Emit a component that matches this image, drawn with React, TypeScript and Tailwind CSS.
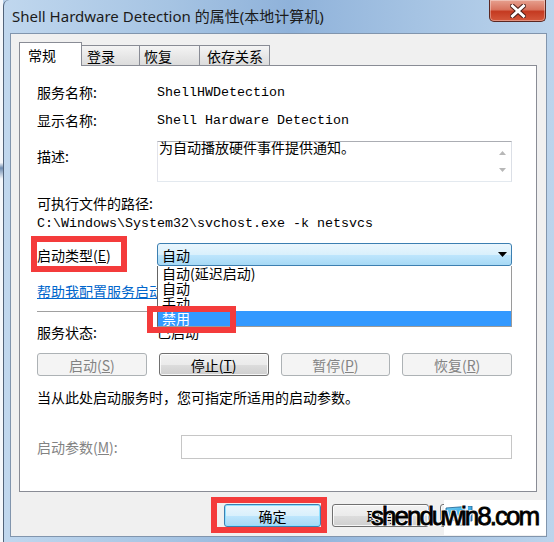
import React from "react";

function Btn({
  children,
  disabled,
  className = "",
}: {
  children: React.ReactNode;
  disabled?: boolean;
  className?: string;
}) {
  if (disabled) {
    return (
      <div
        className={`h-[23px] rounded-[3px] border border-[#adb2b5] bg-[#f4f4f4] text-[#838383] flex items-center justify-center leading-[14px] ${className}`}
      >
        {children}
      </div>
    );
  }
  return (
    <div
      className={`h-[23px] rounded-[3px] border border-[#707070] bg-[linear-gradient(#f2f2f2_0%,#ebebeb_50%,#dddddd_51%,#cfcfcf_100%)] shadow-[inset_0_0_0_1px_rgba(255,255,255,0.8)] text-black flex items-center justify-center leading-[14px] ${className}`}
    >
      {children}
    </div>
  );
}

function Label({ children, w = "w-[120px]" }: { children: React.ReactNode; w?: string }) {
  return <div className={`${w} shrink-0`}>{children}</div>;
}

export default function App() {
  return (
    <div className="relative w-[554px] h-[542px] overflow-hidden flex bg-[#b7cfe9] font-['Noto_Sans_CJK_SC',sans-serif] text-[14px] text-black">
      {/* desktop strip */}
      <div className="w-[3px] h-full shrink-0 bg-[linear-gradient(#f4f7fb_0%,#f4f7fb_30%,#6d8bb0_31%,#f4f7fb_33%,#f4f7fb_100%)]" />
      {/* window */}
      <div className="flex-1 flex flex-col border-l border-[#51637a] rounded-tl-[6px] bg-[linear-gradient(90deg,#c0d7ee_0%,#a6c4e3_30%,#8fb2da_52%,#a5c3e3_75%,#bcd4ec_100%)]">
        {/* title bar */}
        <div className="h-[33px] shrink-0 flex items-start justify-between">
          <div className="pl-[8px] pt-[6px] text-[15px] leading-[20px] text-[#1b1b1b] font-['Noto_Sans','Noto_Sans_CJK_SC',sans-serif] whitespace-nowrap">
            Shell Hardware Detection 的属性(本地计算机)
          </div>
          <div className="mr-[8px] w-[57px] h-[22px] rounded-b-[5px] border border-t-0 border-[#5b2721] bg-[linear-gradient(#e6a08f_0%,#d8745f_45%,#c53a21_55%,#d4583c_100%)] shadow-[inset_0_0_0_1px_rgba(255,255,255,0.35)] flex items-center justify-center">
            <svg width="16" height="14" viewBox="0 0 16 14">
              <path d="M2.5 2 L13.5 12 M13.5 2 L2.5 12" stroke="#4a1d17" strokeWidth="5" strokeLinecap="square" />
              <path d="M2.5 2 L13.5 12 M13.5 2 L2.5 12" stroke="#ffffff" strokeWidth="3" strokeLinecap="square" />
            </svg>
          </div>
        </div>

        {/* client area */}
        <div className="ml-[6px] mr-[7px] mb-[5px] flex-1 border border-[#8195ad] bg-[#f0f0f0] pt-[8px] pl-[8px] pr-[9px] flex flex-col">
          {/* tabs */}
          <div className="h-[23px] flex items-end">
            <div className="relative z-10 mb-[-1px] w-[63px] h-[24px] bg-white border border-b-0 border-[#898c95] pl-[8px] flex items-center leading-[14px]">
              常规
            </div>
            <div className="w-[58px] h-[20px] border border-b-0 border-l-0 border-[#898c95] bg-[linear-gradient(#f4f4f4,#e8e8e8_50%,#dcdcdc)] pl-[5px] flex items-center leading-[14px]">
              登录
            </div>
            <div className="w-[60px] h-[20px] border border-b-0 border-l-0 border-[#898c95] bg-[linear-gradient(#f4f4f4,#e8e8e8_50%,#dcdcdc)] pl-[4px] flex items-center leading-[14px]">
              恢复
            </div>
            <div className="w-[70px] h-[20px] border border-b-0 border-l-0 border-[#898c95] bg-[linear-gradient(#f4f4f4,#e8e8e8_50%,#dcdcdc)] pl-[7px] flex items-center leading-[14px]">
              依存关系
            </div>
          </div>

          {/* panel */}
          <div className="h-[427px] border border-[#898c95] bg-white pl-[17px] pr-[24px] flex flex-col">
            <div className="mt-[16px] h-[20px] flex items-center leading-[14px]">
              <Label>服务名称:</Label>
              <div className="relative top-[1px] font-['Liberation_Mono',monospace] text-[13.33px]">ShellHWDetection</div>
            </div>
            <div className="mt-[8px] h-[20px] flex items-center leading-[14px]">
              <Label>显示名称:</Label>
              <div className="relative top-[1px] font-['Liberation_Mono',monospace] text-[13.33px]">Shell Hardware Detection</div>
            </div>
            <div className="mt-[11px] h-[41px] flex leading-[14px]">
              <Label>
                <div className="pt-[8px]">描述:</div>
              </Label>
              <div className="flex-1 border border-[#abadb3] border-b-[#e3e9ef] border-l-[#e2e3ea] border-r-[#dbdfe6] flex">
                <div className="flex-1 pl-[1px] -mt-[2px] leading-[14px]">为自动播放硬件事件提供通知。</div>
                <div className="w-[17px] flex flex-col items-center justify-between py-[9px]">
                  <svg width="7" height="4" viewBox="0 0 7 4">
                    <path d="M0 4 L3.5 0 L7 4 Z" fill="#b7b7b7" />
                  </svg>
                  <svg width="7" height="4" viewBox="0 0 7 4">
                    <path d="M0 0 L3.5 4 L7 0 Z" fill="#b7b7b7" />
                  </svg>
                </div>
              </div>
            </div>
            <div className="mt-[11px] h-[20px] flex items-center leading-[14px]">可执行文件的路径:</div>
            <div className="mt-[1px] h-[20px] flex items-center font-['Liberation_Mono',monospace] text-[13.33px] leading-[14px] whitespace-pre">
              C:\Windows\System32\svchost.exe -k netsvcs
            </div>

            <div className="mt-[9px] h-[23px] flex items-center leading-[14px]">
              <Label>
                启动类型(<u>E</u>)
              </Label>
              <div className="relative flex-1 h-[23px]">
                <div className="h-[23px] rounded-[3px] border border-[#3c7fb1] bg-[linear-gradient(#eaf6fd_0%,#d9f0fc_50%,#bee6fd_51%,#a7d9f5_100%)] flex items-center justify-between pl-[4px] pr-[4px]">
                  <span>自动</span>
                  <svg width="9" height="5" viewBox="0 0 9 5">
                    <path d="M0 0 L9 0 L4.5 5 Z" fill="#000" />
                  </svg>
                </div>
                <div className="absolute z-20 left-0 top-full w-full h-[61px] bg-white border border-t-0 border-[#9a9a9a] border-l-[#646464] flex flex-col leading-[15px]">
                  <div className="h-[15px] pl-[4px]">自动(延迟启动)</div>
                  <div className="h-[15px] pl-[4px]">自动</div>
                  <div className="h-[15px] pl-[4px]">手动</div>
                  <div className="h-[15px] pl-[4px] bg-[#3399ff] text-white">禁用</div>
                </div>
              </div>
            </div>

            <div className="mt-[15px] h-[20px] flex items-center leading-[14px] text-[#0066cc] underline whitespace-nowrap">
              帮助我配置服务启动选项。
            </div>
            <div className="mt-[10px] h-[1px] bg-[#a0a0a0]" />
            <div className="mt-[10px] h-[20px] flex items-center leading-[14px]">
              <Label>服务状态:</Label>
              <div>已启动</div>
            </div>
            <div className="mt-[11px] grid grid-cols-4 gap-x-[12px]">
              <Btn disabled>
                启动(<u>S</u>)
              </Btn>
              <Btn>
                停止(<u>T</u>)
              </Btn>
              <Btn disabled>
                暂停(<u>P</u>)
              </Btn>
              <Btn disabled>
                恢复(<u>R</u>)
              </Btn>
            </div>
            <div className="mt-[11px] h-[20px] flex items-center leading-[14px] whitespace-nowrap">
              当从此处启动服务时，您可指定所适用的启动参数。
            </div>
            <div className="mt-[28px] h-[24px] flex items-center leading-[14px]">
              <Label w="w-[144px]">
                <span className="text-[#838383]">
                  启动参数(<u>M</u>):
                </span>
              </Label>
              <div className="flex-1 h-[24px] border border-[#c6c6c6] bg-white" />
            </div>
          </div>

          {/* bottom buttons */}
          <div className="mt-[12px] flex justify-end gap-[11px]">
            <div className="w-[97px] h-[23px] rounded-[3px] border border-[#3c7fb1] bg-[linear-gradient(#eaf6fd_0%,#d9f0fc_50%,#bee6fd_51%,#a7d9f5_100%)] shadow-[inset_0_0_0_1px_#8fe0ff] flex items-center justify-center leading-[14px]">
              确定
            </div>
            <Btn className="w-[97px]">取消</Btn>
            <Btn className="w-[97px]">
              应用(<u>A</u>)
            </Btn>
          </div>
        </div>
      </div>

      {/* red annotation boxes */}
      <div className="absolute left-[31px] top-[236px] w-[96px] h-[36px] border-[6px] border-[#f43b3b] z-30" />
      <div className="absolute left-[147px] top-[306px] w-[89px] h-[27px] border-[6px] border-[#f43b3b] z-30" />
      <div className="absolute left-[211px] top-[497px] w-[116px] h-[36px] border-[6px] border-[#f43b3b] z-30" />

      {/* watermark */}
      <div className="absolute left-[444px] top-[500px] w-[102px] h-[35px] bg-white z-30" />
      <div className="absolute left-[445px] top-[506px] z-40">
        <svg width="30" height="22" viewBox="0 0 30 22">
          <defs>
            <linearGradient id="scr" x1="0" y1="0" x2="1" y2="1">
              <stop offset="0" stopColor="#6fd0f5" />
              <stop offset="1" stopColor="#1f8fd6" />
            </linearGradient>
          </defs>
          <path d="M1 2 L27 0 L27 15 L1 14 Z" fill="url(#scr)" stroke="#1a5f8f" strokeWidth="0.8" />
          <path d="M11 15 L17 15 L18 20 L10 20 Z" fill="#9aa6b0" />
          <path d="M20 0 L23 0 L23 15 L20 15 Z" fill="#ffffff" opacity="0.85" />
        </svg>
      </div>
      <div className="absolute left-[371px] top-[500px] z-50 font-['Liberation_Sans',Arial,sans-serif] text-[26px] leading-[32px] tracking-[-2px] text-black whitespace-nowrap [-webkit-text-stroke:0.8px_#000] [text-shadow:1px_1px_0_#fff,-1px_-1px_0_#fff,1px_-1px_0_#fff,-1px_1px_0_#fff,0_1px_0_#fff,0_-1px_0_#fff,1px_0_0_#fff,-1px_0_0_#fff]">
        shenduwin8.com
      </div>
    </div>
  );
}
